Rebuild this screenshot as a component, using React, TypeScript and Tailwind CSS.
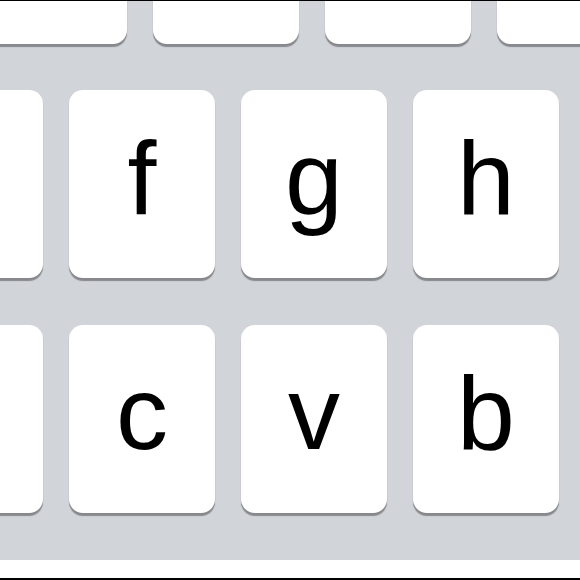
import React from "react";

function Key({ label }: { label?: string }) {
  return (
    <div className="w-[146px] h-[188px] shrink-0 rounded-[14px] bg-white shadow-[0_3px_1px_#88898d] flex justify-center pt-[36px]">
      {label ? (
        <span className="text-[104px] leading-none text-black" style={{ fontFamily: '"Liberation Sans", Arial, sans-serif' }}>
          {label}
        </span>
      ) : null}
    </div>
  );
}

export default function App() {
  return (
    <div className="w-[580px] h-[580px] overflow-hidden bg-white border-t border-b-2 border-black flex flex-col">
      <div className="h-[559px] shrink-0 overflow-hidden bg-[#d1d4d9]">
        <div className="flex flex-col -mt-[145px]">
          <div className="flex gap-[26px] -ml-[19px]">
            <Key />
            <Key />
            <Key />
            <Key />
          </div>
          <div className="flex gap-[26px] -ml-[103px] mt-[46px]">
            <Key />
            <Key label="f" />
            <Key label="g" />
            <Key label="h" />
          </div>
          <div className="flex gap-[26px] -ml-[103px] mt-[47px]">
            <Key />
            <Key label="c" />
            <Key label="v" />
            <Key label="b" />
          </div>
        </div>
      </div>
    </div>
  );
}
